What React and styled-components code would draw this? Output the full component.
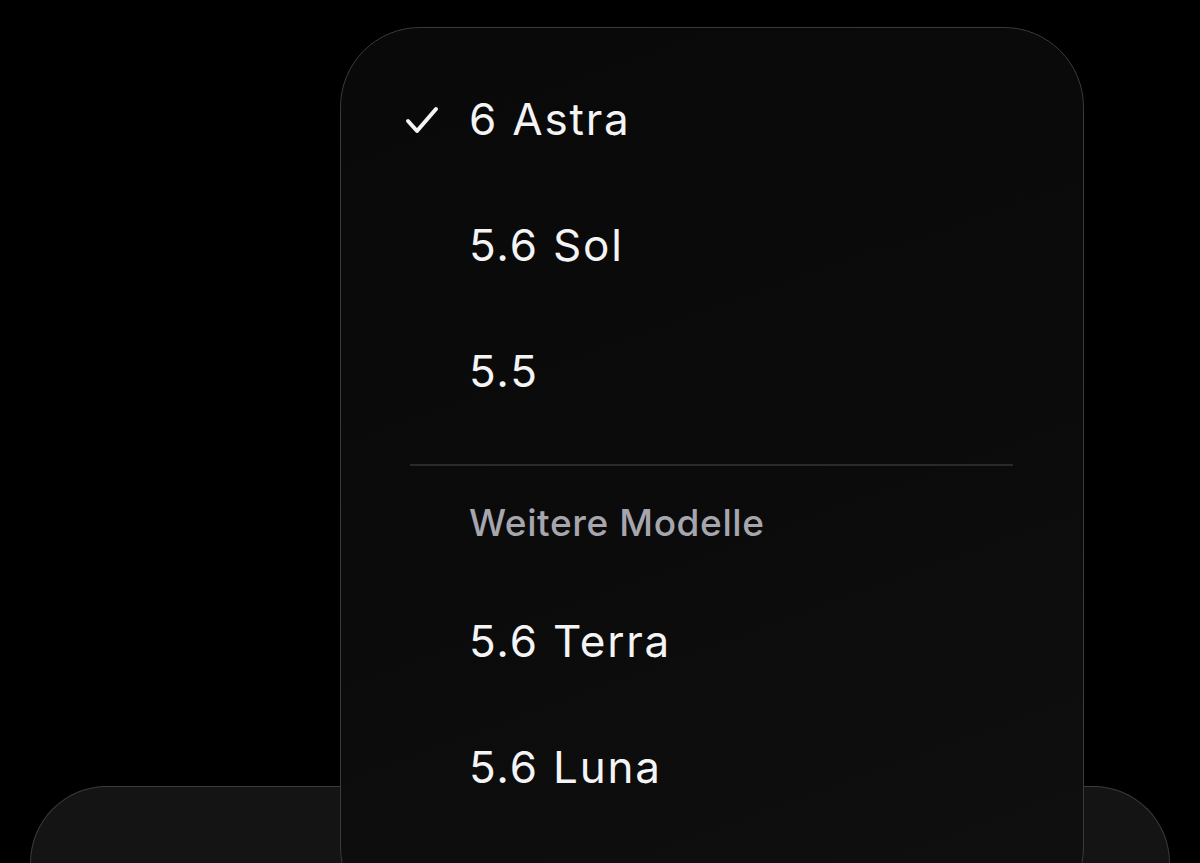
import React from "react";
import styled, { createGlobalStyle } from "styled-components";

const GlobalStyle = createGlobalStyle`
  html, body {
    margin: 0;
    padding: 0;
    background: #000;
    overflow: hidden;
  }
  body {
    font-family: Inter, "Noto Sans", "Liberation Sans", sans-serif;
    -webkit-font-smoothing: antialiased;
  }
`;

const Screen = styled.div`
  position: relative;
  width: 1200px;
  height: 863px;
  background: #000;
  overflow: hidden;
  display: flex;
  flex-direction: column;
  justify-content: flex-end;
`;

const Composer = styled.div`
  margin: 0 30px;
  height: 76px;
  background: #141414;
  border: 1.5px solid #3c3c3e;
  border-bottom: none;
  border-radius: 84px 84px 0 0;
`;

const Menu = styled.div`
  position: absolute;
  top: 27px;
  left: 340px;
  width: 744px;
  height: 900px;
  box-sizing: border-box;
  padding-top: 28px;
  background: linear-gradient(160deg, #090909 0%, #0b0b0c 55%, #101011 100%);
  border: 1.5px solid #3a3a3c;
  border-radius: 80px;
  display: flex;
  flex-direction: column;
`;

const Item = styled.div`
  height: 126px;
  display: flex;
  align-items: center;
  padding-left: 64px;
  color: #f4f4f5;
  font-size: 44px;
  font-weight: 400;
  letter-spacing: 1.8px;
`;

const CheckSlot = styled.div`
  width: 64px;
  display: flex;
  align-items: center;
  padding-top: 2px;
`;

const Divider = styled.div`
  height: 2px;
  margin: 30px 70px 0 69px;
  background: #2a2a2c;
`;

const Header = styled.div`
  height: 112px;
  display: flex;
  align-items: center;
  padding-left: 128px;
  color: #a6a6ae;
  font-size: 37px;
  font-weight: 500;
  letter-spacing: 0.6px;
`;

const Check = () => (
  <svg width="34" height="28" viewBox="0 0 34 28" fill="none">
    <path
      d="M3 15 L12 25 L31 3"
      stroke="#f4f4f5"
      strokeWidth="4"
      strokeLinecap="round"
      strokeLinejoin="round"
    />
  </svg>
);

const MenuItem = ({ checked, children }) => (
  <Item>
    <CheckSlot>{checked && <Check />}</CheckSlot>
    {children}
  </Item>
);

export default function App() {
  return (
    <>
      <GlobalStyle />
      <Screen>
        <Composer />
        <Menu>
          <MenuItem checked>6 Astra</MenuItem>
          <MenuItem>5.6 Sol</MenuItem>
          <MenuItem>5.5</MenuItem>
          <Divider />
          <Header>Weitere Modelle</Header>
          <MenuItem>5.6 Terra</MenuItem>
          <MenuItem>5.6 Luna</MenuItem>
        </Menu>
      </Screen>
    </>
  );
}
